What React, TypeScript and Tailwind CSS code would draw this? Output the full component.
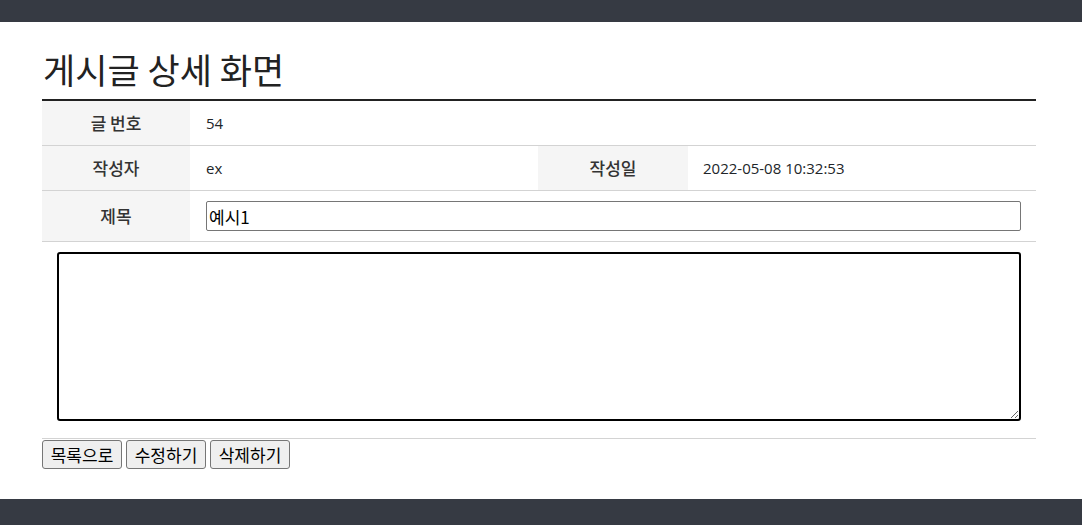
const Label = ({ children, className = "" }: { children: React.ReactNode; className?: string }) => (
  <div
    className={`flex items-center justify-center bg-[#f5f5f5] text-[17px] font-medium text-[#333] ${className}`}
  >
    {children}
  </div>
);

const valueFont = "font-['Open_Sans','Noto_Sans_CJK_KR',sans-serif] text-[15px]";

export default function App() {
  return (
    <div className="flex min-h-[525px] flex-col bg-white font-['Noto_Sans_CJK_KR','Noto_Sans',sans-serif] text-[#212529]">
      <div className="h-[22px] bg-[#363a43]" />
      <main className="flex-1 pb-[30px] pl-[42px] pr-[46px] pt-[28px]">
        <h1 className="mb-[11px] pl-px text-[35px] font-normal leading-[38px] text-[#222]">
          게시글 상세 화면
        </h1>
        <div className="border-t-2 border-[#222]">
          <div className="flex h-[45px] border-b border-[#d3d3d3]">
            <Label className="w-[148px]">글 번호</Label>
            <div className={`flex items-center pl-4 ${valueFont}`}>54</div>
          </div>
          <div className="flex h-[45px] border-b border-[#d3d3d3]">
            <Label className="w-[148px]">작성자</Label>
            <div className={`flex w-[348px] items-center pl-4 ${valueFont}`}>ex</div>
            <Label className="w-[150px]">작성일</Label>
            <div className={`flex items-center pl-[15px] ${valueFont}`}>2022-05-08 10:32:53</div>
          </div>
          <div className="flex h-[51px] border-b border-[#d3d3d3]">
            <Label className="w-[148px]">제목</Label>
            <div className="flex flex-1 items-center pl-4 pr-[15px]">
              <input
                type="text"
                defaultValue="예시1"
                className="h-[30px] w-full rounded-[2px] border border-[#767676] px-[2px] text-[17px] text-black outline-none"
              />
            </div>
          </div>
          <div className="border-b border-[#d3d3d3] px-[15px] pb-[17px] pt-[10px]">
            <textarea
              autoFocus
              className="block h-[169px] w-full resize rounded-[3px] border-2 border-black p-[2px] text-[14px] outline-none"
            />
          </div>
          <div className="flex gap-1 pt-[1px]">
            {["목록으로", "수정하기", "삭제하기"].map((t) => (
              <button
                key={t}
                type="button"
                className="h-[29px] w-[80px] rounded-[3px] border border-[#767676] bg-[#efefef] text-[17px] leading-none text-black"
              >
                {t}
              </button>
            ))}
          </div>
        </div>
      </main>
      <div className="h-[26px] bg-[#363a43]" />
    </div>
  );
}
